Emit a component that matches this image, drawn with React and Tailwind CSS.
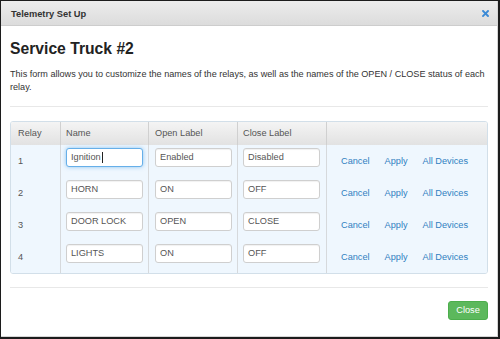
import React from "react";

const rows = [
  { n: 1, name: "Ignition", open: "Enabled", close: "Disabled", focus: true },
  { n: 2, name: "HORN", open: "ON", close: "OFF" },
  { n: 3, name: "DOOR LOCK", open: "OPEN", close: "CLOSE" },
  { n: 4, name: "LIGHTS", open: "ON", close: "OFF" },
];

function Field({ value, focus }) {
  return (
    <div
      className={
        "w-[77px] h-[19px] rounded-[3px] bg-white flex items-center pl-[4px] text-[9.2px] text-[#555] border " +
        (focus
          ? "border-[#66afe9] shadow-[0_0_4px_rgba(102,175,233,0.7)]"
          : "border-[#cfcfcf] shadow-[inset_0_1px_1px_rgba(0,0,0,0.06)]")
      }
    >
      <span>{value}</span>
      {focus && <span className="inline-block w-[1px] h-[11px] bg-[#222] ml-[1px]" />}
    </div>
  );
}

export default function App() {
  return (
    <div className="w-[500px] h-[339px] bg-[#1c1c1c] pl-[1px] pt-[1px] pr-[2px] pb-[2px] font-['Liberation_Sans',Arial,sans-serif]">
      <div className="w-full h-full bg-white border-b border-r border-[#d6d6d6] flex flex-col text-[#333]">
        {/* header */}
        <div className="h-[25px] shrink-0 bg-gradient-to-b from-[#ececec] to-[#dcdcdc] border-b border-[#cdcdcd] flex items-center justify-between pl-[10px] pr-[8px] pt-[3px]">
          <span className="text-[9.3px] font-bold text-[#333]">Telemetry Set Up</span>
          <svg width="7" height="7" viewBox="0 0 7 7" className="mb-[2px]">
            <path d="M1 1 L6 6 M6 1 L1 6" stroke="#3b8ad6" strokeWidth="1.9" strokeLinecap="square" />
          </svg>
        </div>

        {/* body */}
        <div className="pl-[9px] pr-[9px] flex flex-col">
          <h3 className="mt-[14px] text-[15.7px] leading-[18px] font-bold text-[#222]">Service Truck #2</h3>
          <p className="mt-[10px] text-[9.1px] leading-[13px] text-[#333] pr-[1px]">
            This form allows you to customize the names of the relays, as well as the names of the OPEN / CLOSE status of each relay.
          </p>
          <div className="mt-[12px] h-px bg-[#e8e8e8]" />

          {/* table */}
          <div className="mt-[14px] border border-[#d2dfe9] rounded-[3px] overflow-hidden text-[9.2px] text-[#555]">
            <div className="grid grid-cols-[49px_88px_89px_89px_1fr] h-[23px] bg-gradient-to-b from-[#f4f4f4] to-[#e2e2e2]">
              <div className="pl-[7px] flex items-center">Relay</div>
              <div className="pl-[5px] flex items-center border-l border-[#d0d0d0]">Name</div>
              <div className="pl-[6px] flex items-center border-l border-[#d0d0d0]">Open Label</div>
              <div className="pl-[5px] flex items-center border-l border-[#d0d0d0]">Close Label</div>
              <div className="border-l border-[#d0d0d0]" />
            </div>
            {rows.map((r) => (
              <div key={r.n} className="grid grid-cols-[49px_88px_89px_89px_1fr] h-[32px] bg-[#eff7fe]">
                <div className="pl-[7px] flex items-center pt-[1px]">{r.n}</div>
                <div className="pl-[5px] pt-[3px] border-l border-[#d6d9dc]">
                  <Field value={r.name} focus={r.focus} />
                </div>
                <div className="pl-[6px] pt-[3px] border-l border-[#d6d9dc]">
                  <Field value={r.open} />
                </div>
                <div className="pl-[5px] pt-[3px] border-l border-[#d6d9dc]">
                  <Field value={r.close} />
                </div>
                <div className="pl-[14px] flex items-center gap-[15px] pt-[1px] border-l border-[#d6d9dc] text-[#2f7fc1]">
                  <span>Cancel</span>
                  <span>Apply</span>
                  <span>All Devices</span>
                </div>
              </div>
            ))}
          </div>

          <div className="mt-[13px] h-px bg-[#e8e8e8]" />
          <div className="mt-[13px] flex justify-end">
            <div className="w-[40px] h-[19px] rounded-[3px] bg-[#5cb85c] border border-[#4cae4c] text-white text-[9.2px] flex items-center justify-center">
              Close
            </div>
          </div>
        </div>
      </div>
    </div>
  );
}
